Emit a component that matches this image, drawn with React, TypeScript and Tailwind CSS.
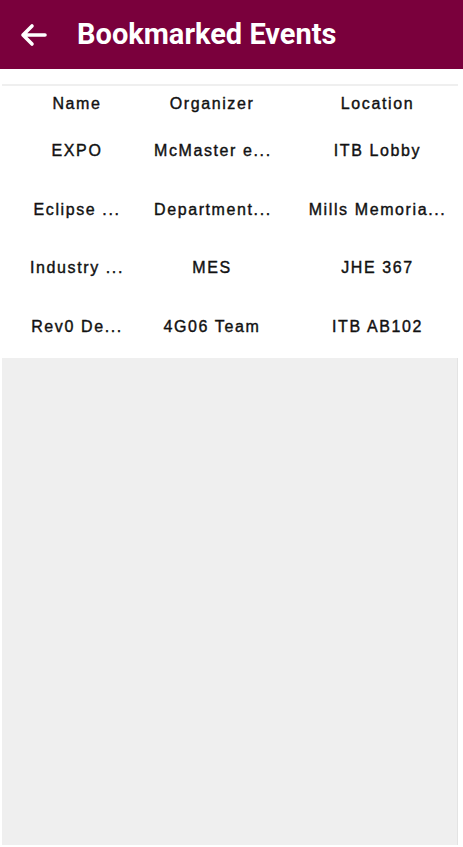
import React from "react";

const rows = [
  ["EXPO", "McMaster e...", "ITB Lobby"],
  ["Eclipse ...", "Department...", "Mills Memoria..."],
  ["Industry ...", "MES", "JHE 367"],
  ["Rev0 De...", "4G06 Team", "ITB AB102"],
];

function Row({ cells, className }: { cells: string[]; className: string }) {
  return (
    <div className={"grid grid-cols-[154px_116px_1fr] items-center " + className}>
      <div className="text-center whitespace-nowrap">{cells[0]}</div>
      <div className="text-center whitespace-nowrap">{cells[1]}</div>
      <div className="text-center whitespace-nowrap pl-[22px]">{cells[2]}</div>
    </div>
  );
}

export default function App() {
  return (
    <div className="w-[463px] h-[847px] bg-white flex flex-col overflow-hidden">
      <div className="h-[69px] bg-[#7a003c] flex items-center shrink-0">
        <svg width="28" height="24" viewBox="0 0 28 24" className="ml-[19px]">
          <path d="M26 12H4M13 3L4 12l9 9" fill="none" stroke="white" strokeWidth="3.6" strokeLinecap="round" strokeLinejoin="round" />
        </svg>
        <div className="ml-[30px] text-white text-[29px] font-bold [font-family:Roboto,sans-serif] leading-none">
          Bookmarked Events
        </div>
      </div>
      <div className="h-[15px] shrink-0" />
      <div className="ml-[2px] mr-[5px] h-[2px] bg-[#efefef] shrink-0" />
      <div className="[font-family:'Liberation_Sans',Arial,sans-serif] text-[16px] leading-none text-[#111] tracking-[1.6px] [-webkit-text-stroke:0.4px_#111] shrink-0">
        <Row cells={["Name", "Organizer", "Location"]} className="h-[36px]" />
        <Row cells={rows[0]} className="h-[58px]" />
        <Row cells={rows[1]} className="h-[59px]" />
        <Row cells={rows[2]} className="h-[58px]" />
        <Row cells={rows[3]} className="h-[59px]" />
      </div>
      <div className="h-[2px] shrink-0" />
      <div className="ml-[2px] mr-[5px] flex-1 mb-[2px] bg-[#efefef] border-r border-[#e3e3e3]" />
    </div>
  );
}
